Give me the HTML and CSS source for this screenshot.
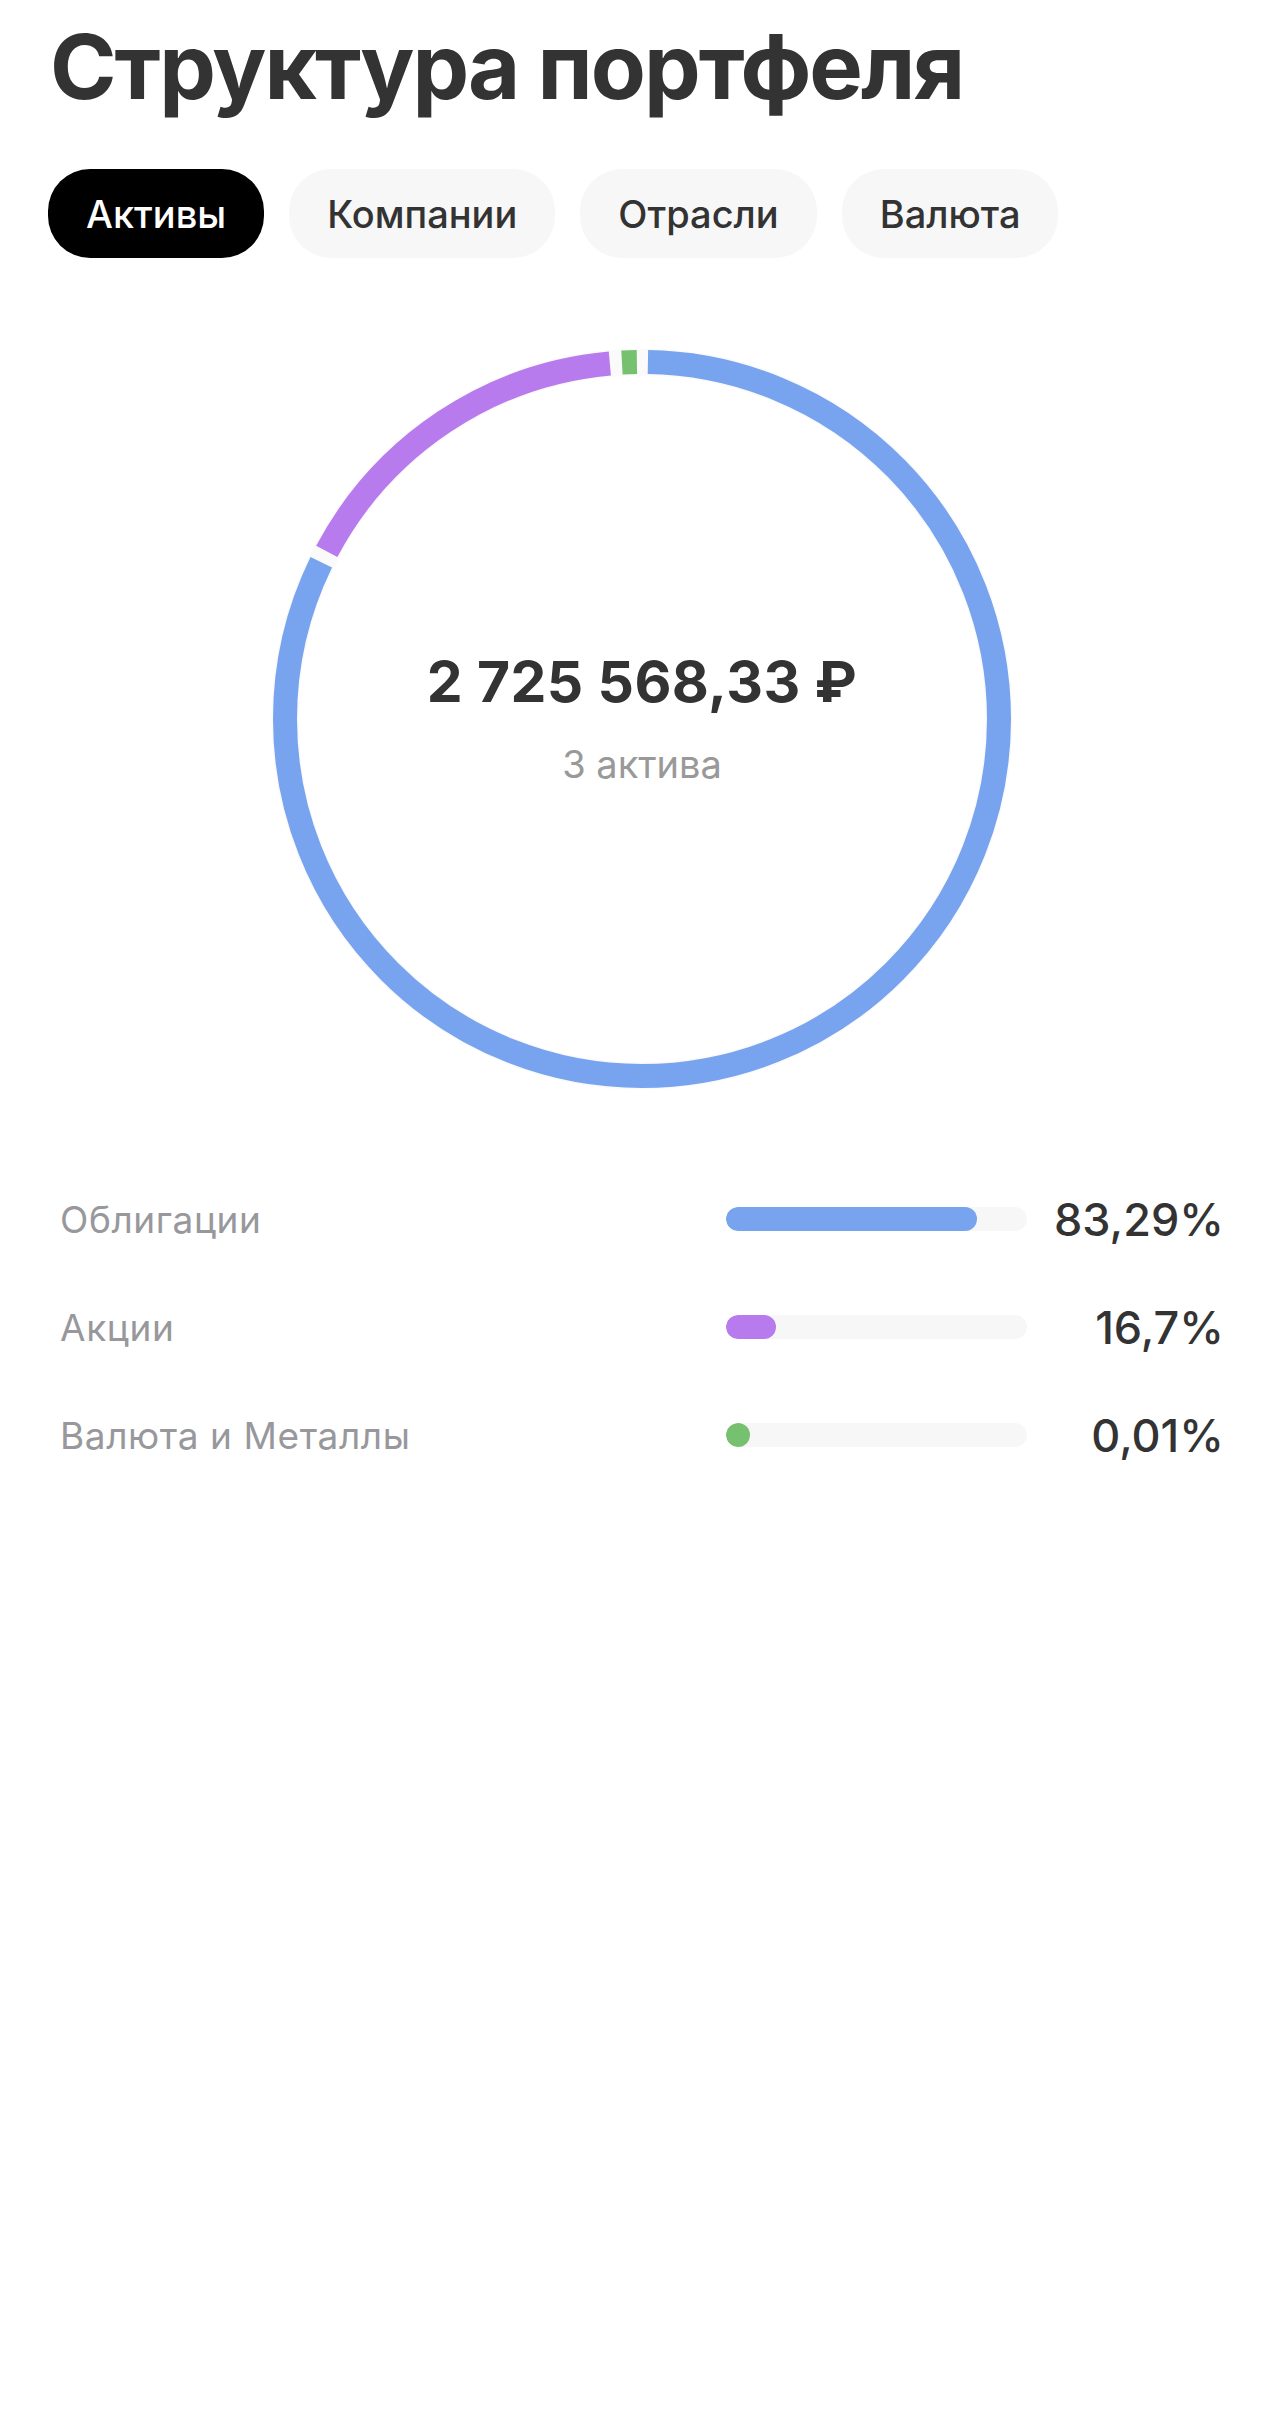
FILE: index.html
```html
<!DOCTYPE html>
<html lang="ru">
<head>
  <meta charset="UTF-8">
  <meta name="viewport" content="width=device-width, initial-scale=1.0">
  <title>Структура портфеля</title>
  <link rel="stylesheet" href="styles.css">
</head>
<body>

  <h1 class="title">Структура портфеля</h1>

  <div class="tabs">
    <button class="tab active">Активы</button>
    <button class="tab">Компании</button>
    <button class="tab">Отрасли</button>
    <button class="tab">Валюта</button>
  </div>

  <div class="donut">
    <svg class="donut-chart" width="750" height="750" viewBox="0 0 750 750">
      <g transform="rotate(-90 375 375)">
        <circle class="track" cx="375" cy="375" r="357" />
        <!-- длина окружности 2243, сегменты с зазорами по 12px -->
        <circle class="seg seg-blue" cx="375" cy="375" r="357"
                stroke-dasharray="1838 2243" stroke-dashoffset="-6" />
        <circle class="seg seg-purple" cx="375" cy="375" r="357"
                stroke-dasharray="354 2243" stroke-dashoffset="-1856" />
        <circle class="seg seg-green" cx="375" cy="375" r="357"
                stroke-dasharray="15 2243" stroke-dashoffset="-2222" />
      </g>
    </svg>
    <div class="donut-center">
      <div class="total">2 725 568,33 ₽</div>
      <div class="count">3 актива</div>
    </div>
  </div>

  <div class="legend">
    <div class="legend-row">
      <span class="legend-name">Облигации</span>
      <div class="bar"><div class="bar-fill blue" style="width: 83.29%"></div></div>
      <span class="legend-value">83,29%</span>
    </div>
    <div class="legend-row">
      <span class="legend-name">Акции</span>
      <div class="bar"><div class="bar-fill purple" style="width: 16.7%"></div></div>
      <span class="legend-value">16,7%</span>
    </div>
    <div class="legend-row">
      <span class="legend-name">Валюта и Металлы</span>
      <div class="bar"><div class="bar-fill green" style="width: 0.01%"></div></div>
      <span class="legend-value">0,01%</span>
    </div>
  </div>

</body>
</html>
```

FILE: styles.css
```css
body {
  margin: 0;
  padding: 0 48px;
  background-color: white;
  color: #333;
  font-family: Inter, "Noto Sans", sans-serif;
}
.title {
  margin: 12px 0 0 2px;
  font-size: 90px;
  line-height: 110px;
  font-weight: 700;
  letter-spacing: -2px;
  color: #333;
}
.tabs {
  display: flex;
  gap: 25px;
  margin-top: 47px;
}
.tab {
  height: 89px;
  padding: 0 38px;
  border: none;
  border-radius: 42px;
  background-color: #f7f7f7;
  color: #333;
  font-family: inherit;
  font-size: 38px;
  font-weight: 500;
}
.tab.active {
  background-color: black;
  color: white;
}
.donut {
  position: relative;
  width: 750px;
  height: 750px;
  margin: 86px auto 0;
}
.donut-chart {
  display: block;
}
.track {
  fill: none;
  stroke: #fafafa;
  stroke-width: 27;
}
.seg {
  fill: none;
  stroke-width: 24;
}
.seg-blue { stroke: #78a3ef; }
.seg-purple { stroke: #b77bee; }
.seg-green { stroke: #76c16f; }
.donut-center {
  position: absolute;
  inset: 0;
  display: flex;
  flex-direction: column;
  align-items: center;
  justify-content: center;
  padding-bottom: 4px;
  box-sizing: border-box;
}
.total {
  font-size: 57px;
  font-weight: 700;
  line-height: 68px;
  letter-spacing: 0.4px;
  color: #333;
}
.count {
  margin-top: 25px;
  font-size: 38px;
  line-height: 46px;
  color: #999;
}
.legend {
  margin-top: 71px;
  padding: 0 12px;
}
.legend-row {
  display: flex;
  align-items: center;
  height: 108px;
}
.legend-name {
  flex: 1;
  font-size: 37px;
  letter-spacing: 0.6px;
  color: #98989c;
}
.bar {
  width: 301px;
  height: 24px;
  border-radius: 12px;
  background-color: #f7f7f7;
  overflow: hidden;
}
.bar-fill {
  height: 100%;
  min-width: 24px;
  border-radius: 12px;
}
.bar-fill.blue { background-color: #78a3ef; }
.bar-fill.purple { background-color: #b77bee; }
.bar-fill.green { background-color: #76c16f; }
.legend-value {
  width: 170px;
  margin-left: 27px;
  text-align: right;
  font-size: 45px;
  font-weight: 500;
  color: #333;
}
```
